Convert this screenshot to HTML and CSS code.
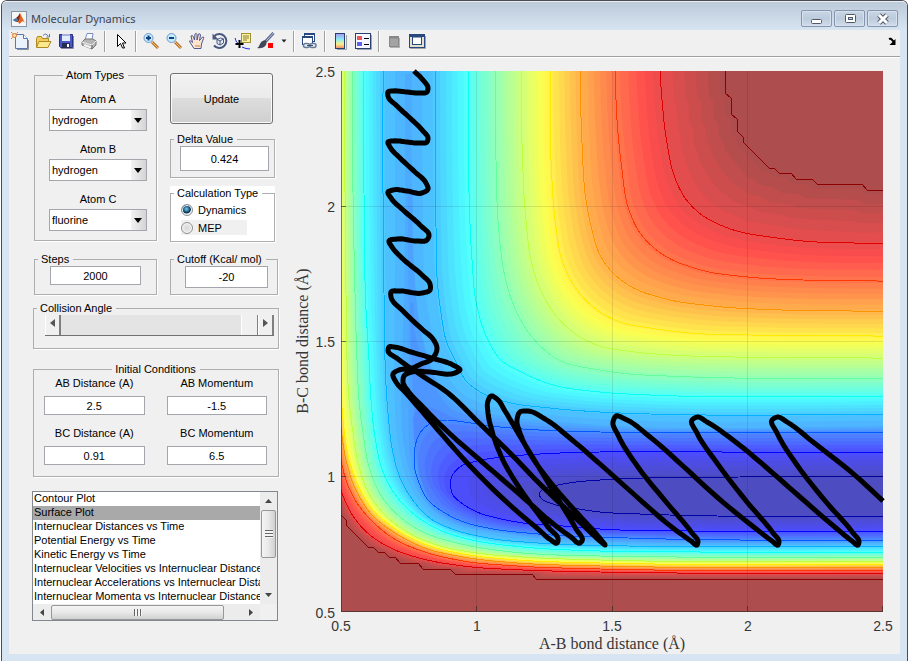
FILE: index.html
```html
<!DOCTYPE html>
<html lang="en">
<head>
<meta charset="utf-8">
<title>Molecular Dynamics</title>
<link rel="stylesheet" href="styles.css">
</head>
<body>
<div class="window">
  <header class="titlebar">
    <svg class="app-icon" width="16" height="16" viewBox="0 0 16 16" aria-hidden="true">
      <rect x="0.5" y="0.5" width="15" height="15" fill="#f4f6f8" stroke="#8a93a0"/>
      <path d="M1.500 9 L5 7 L7 9 L5 11z" fill="#3c78b4"/>
      <path d="M5 7 Q7 6 9 2 L9 8 L7 11 L5 11 L7 9z" fill="#7a2a20"/>
      <path d="M9 2 L14 12 Q12 9 10.500 11 L8.500 13 L7 11 Q9 8 9 2z" fill="#e8641c"/>
    </svg>
    <h1>Molecular Dynamics</h1>
    <div class="window-buttons">
      <button type="button" aria-label="Minimize"><svg width="14" height="12" viewBox="0 0 14 12"><rect x="1.500" y="6.500" width="10" height="4" rx="1" fill="#fff" stroke="#50586a"/></svg></button>
      <button type="button" aria-label="Maximize"><svg width="14" height="12" viewBox="0 0 14 12"><rect x="2.500" y="1.500" width="10" height="8" rx="1" fill="#fff" stroke="#50586a"/><rect x="5.500" y="4.500" width="4" height="2" fill="#c8d2de" stroke="#50586a"/></svg></button>
      <button type="button" aria-label="Close"><svg width="14" height="12" viewBox="0 0 14 12"><path d="M3 2 L11 10 M11 2 L3 10" stroke="#50586a" stroke-width="5"/><path d="M3 2 L11 10 M11 2 L3 10" stroke="#fff" stroke-width="3"/></svg></button>
    </div>
  </header>
  <div class="client">
    <nav class="toolbar" aria-label="Figure toolbar">
      <button type="button" aria-label="New figure"><svg viewBox="0 0 18 18"><path d="M4.500 2.500h8l4 4v10h-12z" fill="#eaf2fc" stroke="#5878b0"/><path d="M12.500 2.500v4h4" fill="#fff" stroke="#5878b0"/><path d="M6 17.500h11.500V8" fill="none" stroke="#8c9096"/><circle cx="3.500" cy="3.500" r="2" fill="#ffe8a0" stroke="#e07030"/><path d="M0 0l1.500 1.500M7 0L5.500 1.500M0 7l1.500-1.500" stroke="#e07030"/></svg></button>
      <button type="button" aria-label="Open file"><svg viewBox="0 0 18 18"><path d="M2.500 15V6.500l1-2h4l1 2h6v3" fill="#f0cc60" stroke="#b08820"/><path d="M2.500 15.500L5 9.500h12l-3 6z" fill="#fce88c" stroke="#b08820"/><path d="M9 3.500q3-3 5 0.500m1.500-2v3h-3" fill="none" stroke="#5878a0"/></svg></button>
      <button type="button" aria-label="Save"><svg viewBox="0 0 18 18"><path d="M2.500 2.500h13v13h-12l-1-1z" fill="#4858c8" stroke="#283078"/><rect x="5" y="2" width="8" height="7" fill="#e4ecf8"/><rect x="5" y="2" width="8" height="2" fill="#a8b0e0"/><rect x="5" y="11" width="8" height="5" fill="#252c50"/><rect x="10" y="12" width="2" height="3" fill="#fff"/><path d="M4 16.500h12.500V4" fill="none" stroke="#88a"/></svg></button>
      <button type="button" aria-label="Print"><svg viewBox="0 0 18 18"><path d="M5 8L7 1.500h6L12 8z" fill="#f8faff" stroke="#7890c0"/><path d="M2 10l3-3h8l3 2v4l-4 4L2 13z" fill="#b4b4b4" stroke="#777"/><path d="M2 10l10 3 4-4" fill="none" stroke="#eee"/><path d="M4 13l7 2.500" stroke="#f4f4f4" stroke-width="2"/><path d="M12 13v4" stroke="#666"/></svg></button>
      <span class="sep"></span>
      <button type="button" aria-label="Edit plot"><svg viewBox="0 0 18 18"><path d="M6.500 2.500v12l3-3 2 4.500h2l-2-5h3.500z" fill="#fff" stroke="#000"/></svg></button>
      <span class="sep"></span>
      <button type="button" aria-label="Zoom in"><svg viewBox="0 0 18 18"><path d="M10 10l6 6" stroke="#b87028" stroke-width="3"/><path d="M10 10l6 6" stroke="#f4c070"/><circle cx="6.500" cy="6" r="4.500" fill="#c4ecfa" stroke="#7098d0"/><path d="M6.500 3.500v5M4 6h5" stroke="#104080" stroke-width="2"/></svg></button>
      <button type="button" aria-label="Zoom out"><svg viewBox="0 0 18 18"><path d="M10 10l6 6" stroke="#b87028" stroke-width="3"/><path d="M10 10l6 6" stroke="#f4c070"/><circle cx="6.500" cy="6" r="4.500" fill="#c4ecfa" stroke="#7098d0"/><path d="M4 6h5" stroke="#104080" stroke-width="2"/></svg></button>
      <button type="button" aria-label="Pan"><svg viewBox="0 0 18 18"><path d="M6 16.500L1.500 9.500q0-2 3 1L3 4q1.500-1.500 2.500 1L6.500 8 7 2q1.500-1.500 2 0.500V8l1.500-6q1.500-1 2 1L11.500 8.500 14.500 5q2-0.500 1 1.500L13.500 12 13 16.500z" fill="#fde4d0" stroke="#4c5890"/><path d="M7 14h5" stroke="#e8b090" stroke-width="2"/></svg></button>
      <button type="button" aria-label="Rotate 3D"><svg viewBox="0 0 18 18"><path d="M3 4.500A7 7 0 1 1 3 13.500" fill="none" stroke="#485880" stroke-width="2"/><path d="M1.500 1.500v6h6z" fill="#485880"/><path d="M6 7.500l3.500-1.500 3 1v4L9 13l-3-1.500zM6 7.500L9 9l3.500-2M9 9v4" fill="#e8eef8" stroke="#485880"/></svg></button>
      <button type="button" aria-label="Data cursor"><svg viewBox="0 0 18 18"><path d="M1 6q1 5 4 6M8 15q4 2 8 2" fill="none" stroke="#2030e0"/><rect x="7.500" y="1.500" width="9" height="9" fill="#fcf4a0" stroke="#a09030"/><path d="M9 4h6M9 6h6M9 8h4" stroke="#88783c"/><path d="M5.500 8v8M1.500 12h8" stroke="#000" stroke-width="2"/></svg></button>
      <button type="button" aria-label="Brush data"><svg viewBox="0 0 18 18"><path d="M16.500 1L9 9" stroke="#5a6890" stroke-width="3"/><path d="M16.500 1L9 9" stroke="#c0cce0"/><path d="M10 9l-2-1q-4 1-5 4t-3 4q6 1 9-3z" fill="#404858"/><rect x="11" y="11" width="5" height="5" fill="#f00"/></svg></button>
      <button type="button" class="narrow" aria-label="Brush options"><svg viewBox="0 0 18 18"><path d="M6.500 7.500h5L9 10.500z" fill="#222"/></svg></button>
      <span class="sep"></span>
      <button type="button" aria-label="Link plot"><svg viewBox="0 0 18 18"><rect x="4.500" y="1.500" width="10" height="8" fill="#fff" stroke="#284880"/><path d="M4 2h11" stroke="#284880" stroke-width="2"/><rect x="2.500" y="4.500" width="10" height="8" fill="#fff" stroke="#284880"/><path d="M2 5h11" stroke="#284880" stroke-width="2"/><rect x="3.500" y="11.500" width="6" height="4" rx="2" fill="#e4ecf4" stroke="#687c98" stroke-width="1.500"/><rect x="10" y="11.500" width="6" height="4" rx="2" fill="#e4ecf4" stroke="#687c98" stroke-width="1.500"/><path d="M7 13.500h6" stroke="#404c60"/></svg></button>
      <span class="sep"></span>
      <button type="button" aria-label="Insert colorbar"><svg viewBox="0 0 18 18"><defs><linearGradient id="cbar" x1="0" y1="0" x2="0" y2="1"><stop offset="0" stop-color="#a498f0"/><stop offset=".4" stop-color="#90ecf4"/><stop offset=".7" stop-color="#f8f088"/><stop offset="1" stop-color="#f08870"/></linearGradient></defs><path d="M6 17.500h9.500V3" fill="none" stroke="#a0a4a8"/><rect x="4.500" y="1.500" width="9" height="15" fill="url(#cbar)" stroke="#284070"/></svg></button>
      <button type="button" aria-label="Insert legend"><svg viewBox="0 0 18 18"><path d="M3 17.500h14.500V3" fill="none" stroke="#a0a4a8"/><rect x="1.500" y="1.500" width="15" height="15" fill="#f6f6ff" stroke="#284070"/><rect x="3" y="4" width="5" height="4" fill="#e85858"/><rect x="3" y="10" width="5" height="4" fill="#6060e8"/><path d="M10 6.500h5M10 12.500h5" stroke="#000"/></svg></button>
      <span class="sep"></span>
      <button type="button" aria-label="Hide plot tools"><svg viewBox="0 0 18 18"><rect x="5" y="6" width="10" height="10" fill="#b4b4b4"/><rect x="4.500" y="4.500" width="9" height="10" fill="#a4a4a4" stroke="#888"/><path d="M4 5.500h10" stroke="#888" stroke-width="2"/></svg></button>
      <button type="button" aria-label="Show plot tools"><svg viewBox="0 0 18 18"><path d="M2 16.500h15.500V4" fill="none" stroke="#a0a4a8"/><rect x="1.500" y="2.500" width="15" height="13" fill="#e0e0cc" stroke="#284880"/><path d="M1 3.500h16" stroke="#284880" stroke-width="3"/><rect x="4.500" y="5" width="9" height="7.500" fill="#fff" stroke="#284880"/></svg></button>
      <button type="button" class="dock" aria-label="Dock figure"><svg viewBox="0 0 18 18"><path d="M7 7q2-1 3 1l2 2" fill="none" stroke="#000" stroke-width="2"/><path d="M13.500 7v6h-6z" fill="#000"/></svg></button>
    </nav>

    <main>
      <form class="controls">
        <div class="columns">
          <div class="column">
            <fieldset class="centered">
              <legend>Atom Types</legend>
              <div class="atoms">
                <div class="field"><label for="atom-a">Atom A</label><span class="combo"><select id="atom-a"><option>hydrogen</option></select></span></div>
                <div class="field"><label for="atom-b">Atom B</label><span class="combo"><select id="atom-b"><option>hydrogen</option></select></span></div>
                <div class="field"><label for="atom-c">Atom C</label><span class="combo"><select id="atom-c"><option>fluorine</option></select></span></div>
              </div>
            </fieldset>
            <fieldset class="steps">
              <legend><label for="steps">Steps</label></legend>
              <div class="body"><input type="text" id="steps" value="2000"></div>
            </fieldset>
          </div>
          <div class="column">
            <button type="button" class="update">Update</button>
            <fieldset class="delta">
              <legend><label for="delta">Delta Value</label></legend>
              <div class="body"><input type="text" id="delta" value="0.424"></div>
            </fieldset>
            <div class="white">
              <fieldset>
                <legend>Calculation Type</legend>
                <div class="calc">
                  <label><input type="radio" name="calc" checked>Dynamics</label>
                  <label class="off"><input type="radio" name="calc">MEP</label>
                </div>
              </fieldset>
            </div>
            <fieldset class="cutoff">
              <legend><label for="cutoff">Cutoff (Kcal/ mol)</label></legend>
              <div class="body"><input type="text" id="cutoff" value="-20"></div>
            </fieldset>
          </div>
        </div>

        <fieldset class="angle">
          <legend><label for="angle">Collision Angle</label></legend>
          <div class="body slider">
            <button type="button" aria-label="Decrease angle"><svg width="5" height="8" viewBox="0 0 5 8"><path d="M5 0v8L0 4z" fill="#555"/></svg></button>
            <input type="range" id="angle" min="0" max="180" value="180">
            <button type="button" aria-label="Increase angle"><svg width="5" height="8" viewBox="0 0 5 8"><path d="M0 0v8l5-4z" fill="#555"/></svg></button>
          </div>
        </fieldset>

        <fieldset class="initial centered">
          <legend>Initial Conditions</legend>
          <div class="pairs">
            <div class="field"><label for="ab-d">AB Distance (A)</label><input type="text" id="ab-d" value="2.5"></div>
            <div class="field"><label for="ab-m">AB Momentum</label><input type="text" id="ab-m" value="-1.5"></div>
            <div class="field"><label for="bc-d">BC Distance (A)</label><input type="text" id="bc-d" value="0.91"></div>
            <div class="field"><label for="bc-m">BC Momentum</label><input type="text" id="bc-m" value="6.5"></div>
          </div>
        </fieldset>

        <div class="listbox">
          <select size="8" aria-label="Plot type">
            <option>Contour Plot</option>
            <option selected>Surface Plot</option>
            <option>Internuclear Distances vs Time</option>
            <option>Potential Energy vs Time</option>
            <option>Kinetic Energy vs Time</option>
            <option>Internuclear Velocities vs Internuclear Distance</option>
            <option>Internuclear Accelerations vs Internuclear Distance</option>
            <option>Internuclear Momenta vs Internuclear Distance</option>
          </select>
          <div class="bar vertical" aria-hidden="true">
            <svg width="7" height="4" viewBox="0 0 7 4"><path d="M0 4h7L3.500 0z" fill="#444"/></svg>
            <span class="thumb"><i></i></span>
            <svg width="7" height="4" viewBox="0 0 7 4"><path d="M0 0h7L3.500 4z" fill="#444"/></svg>
          </div>
          <div class="bar horizontal" aria-hidden="true">
            <svg width="4" height="7" viewBox="0 0 4 7"><path d="M4 0v7L0 3.500z" fill="#444"/></svg>
            <span class="thumb"><i></i></span>
            <svg width="4" height="7" viewBox="0 0 4 7"><path d="M0 0v7l4-3.500z" fill="#444"/></svg>
          </div>
        </div>
      </form>

      <svg class="plot" viewBox="291 57 609 597" role="img" aria-label="Potential energy surface with trajectory">
        <defs><clipPath id="axes"><rect x="341" y="71" width="542" height="541"/></clipPath></defs>
        <g clip-path="url(#axes)">
          <g id="bands"></g>
          <g id="contours" class="contours"></g>
          <path class="grid" d="M476.500 71v541M612.500 71v541M747.500 71v541M341 206.500h542M341 341.500h542M341 476.500h542"/>
        </g>
        <path class="axis" d="M341.500 71v540.500H883M476.500 611v-5M612.500 611v-5M747.500 611v-5M882.500 611v-5M341 206.500h5M341 341.500h5M341 476.500h5"/>
        <path id="trajectory" class="trajectory"/>
        <g class="ticks ticks-y">
          <text x="335" y="77">2.5</text><text x="335" y="212">2</text><text x="335" y="347">1.5</text><text x="335" y="482">1</text><text x="335" y="618">0.5</text>
        </g>
        <g class="ticks ticks-x">
          <text x="341" y="631">0.5</text><text x="477" y="631">1</text><text x="612" y="631">1.5</text><text x="748" y="631">2</text><text x="883" y="631">2.5</text>
        </g>
        <text class="axis-label" x="612" y="649">A-B bond distance (Å)</text>
        <text class="axis-label" transform="translate(308 341) rotate(-90)">B-C bond distance (Å)</text>
      </svg>
    </main>
  </div>
</div>
<script src="plot.js"></script>
</body>
</html>
```
FILE: styles.css
```css
* { box-sizing: border-box; }

html, body { height: 100%; }

body {
  margin: 0;
  background: #fff;
  font: 11px/14px "Liberation Sans", Arial, sans-serif;
  color: #000;
}

button, input, select { font: inherit; color: inherit; }

.window {
  display: flex;
  flex-direction: column;
  min-height: 100%;
  margin: 0 1px;
  padding: 0 7px 7px;
  border: solid #4c4c54;
  border-width: 1px 1px 0;
  border-radius: 6px 6px 0 0;
  background: #d7e4f2;
}

.titlebar {
  display: flex;
  align-items: center;
  gap: 4px;
  height: 29px;
  margin: 0 -7px;
  padding: 5px 9px 0;
  border-top: 1px solid #e8eef4;
  border-radius: 5px 5px 0 0;
  background: linear-gradient(#bccad9, #d7e4f2);
}

.titlebar h1 {
  flex: 1;
  margin: 0;
  font: 11px/16px "Noto Sans", "Open Sans", sans-serif;
  color: #3c4450;
}

.window-buttons { display: flex; gap: 2px; }

.window-buttons button {
  display: flex;
  align-items: center;
  justify-content: center;
  width: 31px;
  height: 17px;
  padding: 0;
  border: 1px solid #8794b0;
  border-radius: 2px;
  background: linear-gradient(#c8d6e5, #bccbdc 50%, #cfdcea);
  box-shadow: inset 0 0 0 1px #d6e2ee;
}

.client {
  flex: 1;
  display: flex;
  flex-direction: column;
  background: #f0f0f0;
}

.toolbar {
  display: flex;
  align-items: center;
  height: 27px;
  padding-bottom: 4px;
  border-bottom: 1px solid #a0a0a0;
  box-shadow: 0 1px 0 #fff;
}

.toolbar button {
  display: flex;
  align-items: center;
  justify-content: center;
  width: 23px;
  height: 22px;
  padding: 0 1px 0 0;
  border: 0;
  background: none;
}

.toolbar svg { flex: none; width: 18px; height: 18px; }
.toolbar .narrow { width: 12px; }
.toolbar .dock { width: 18px; margin-left: auto; }

.sep {
  width: 2px;
  height: 21px;
  margin: 0 3px;
  border-left: 1px solid #a0a0a0;
  border-right: 1px solid #fff;
}

main {
  display: flex;
  align-items: flex-start;
}

.controls {
  flex: none;
  width: 282px;
  padding: 11px 12px 0 25px;
}

.columns {
  display: grid;
  grid-template-columns: 123px 105px;
  gap: 13px;
}

.column { display: flex; flex-direction: column; }

fieldset {
  min-width: 0;
  margin: 0;
  padding: 0;
  border: 1px solid #aeaeae;
  box-shadow: 1px 1px 0 #fff;
}

legend { padding: 0 4px 0 3px; margin-left: 3px; white-space: nowrap; }
.centered > legend { margin: 0 auto; }

input[type="text"] {
  display: block;
  width: 100%;
  padding: 0;
  border: 1px solid #a4a6ab;
  background: #fff;
  text-align: center;
}

.field { display: flex; flex-direction: column; }
.field label { text-align: center; }

.atoms {
  display: flex;
  flex-direction: column;
  gap: 11px;
  padding: 10px 9px 9px 14px;
}

.atoms .field { gap: 3px; }

.combo {
  position: relative;
  display: block;
  border: 1px solid #a4a6ab;
  background: #fff;
}

.combo select {
  display: block;
  width: 100%;
  height: 20px;
  padding: 0 17px 0 2px;
  border: 0;
  background: none;
  appearance: none;
}

.combo::before {
  content: "";
  position: absolute;
  inset: 0 0 0 auto;
  width: 15px;
  background: linear-gradient(90deg, #f2f2f2, #d4d4d4);
}

.combo::after {
  content: "";
  position: absolute;
  top: 8px;
  right: 4px;
  border: solid transparent;
  border-width: 5px 4px 0;
  border-top-color: #000;
}

.steps { margin-top: 11px; }
.steps .body { padding: 0 15px 9px; }
.steps input { height: 19px; }

.update {
  height: 51px;
  margin: 5px 2px 8px 0;
  border: 1px solid #707070;
  border-radius: 3px;
  background: linear-gradient(#f2f2f2, #ebebeb 48%, #dddddd 50%, #cfcfcf);
  box-shadow: inset 0 0 0 1px #fafafa;
}

.delta .body { padding: 0 5px 6px 9px; }
.delta input { height: 25px; }

.white { margin: 8px 0 10px; background: #fff; }

.calc { padding: 1px 0 4px 10px; }

.calc label {
  display: flex;
  align-items: center;
  gap: 5px;
  height: 18px;
}

.calc .off {
  width: 66px;
  height: 15px;
  margin: 1px 0 2px;
  background: #f0f0f0;
}

.calc input {
  width: 12px;
  height: 12px;
  margin: 0;
  border: 1px solid #8e8f8f;
  border-radius: 50%;
  background: radial-gradient(#d8d8d8, #f4f4f4);
  box-shadow: inset 0 0 0 1px #f4f4f4;
  appearance: none;
}

.calc input:checked {
  background: radial-gradient(circle at 45% 40%, #7cd0f0 0, #185a80 3px, #0c2c4c 4px, #e8eef2 5px);
}

.cutoff { margin-right: -3px; }
.cutoff .body { padding: 0 9px 6px 14px; }
.cutoff input { height: 22px; }

.angle { margin: 6px 0 0 -1px; }

.slider {
  display: flex;
  height: 21px;
  margin: 0 4px 12px 11px;
  border-bottom: 1px solid #707070;
}

.slider button {
  display: flex;
  align-items: center;
  justify-content: center;
  width: 16px;
  padding: 0 0 4px;
  border: solid #fff;
  border-width: 0 0 0 1px;
  border-right: 2px solid #808080;
  background: #f0f0f0;
}

.slider input {
  flex: 1;
  min-width: 0;
  height: 20px;
  margin: 0;
  background: #e4e4e4;
  appearance: none;
}

.slider input::-webkit-slider-thumb {
  width: 17px;
  height: 20px;
  border-left: 1px solid #fff;
  border-right: 1px solid #808080;
  background: #f0f0f0;
  appearance: none;
}

.initial { margin: 13px 0 0 -1px; }

.pairs {
  display: grid;
  grid-template-columns: 1fr 1fr;
  gap: 11px 22px;
  padding: 0 11px 11px 10px;
}

.pairs .field { gap: 6px; }
.pairs input { height: 19px; }

.listbox {
  display: grid;
  grid-template-columns: 1fr 17px;
  grid-template-rows: 112px 16px;
  margin: 14px 1px 0 -2px;
  border: 1px solid #828790;
  background: #f0f0f0;
}

.listbox select {
  width: 100%;
  min-width: 0;
  height: 112px;
  padding: 0;
  border: 0;
  border-radius: 0;
  outline: 0;
  background: #fff;
  overflow: hidden;
  scrollbar-width: none;
}

.listbox option {
  height: 14px;
  min-height: 14px;
  padding: 0 1px;
  line-height: 14px;
  overflow: hidden;
}

.listbox option:checked {
  background: #a9a9a9 linear-gradient(#a9a9a9, #a9a9a9);
  color: #000;
}

.bar { display: flex; align-items: center; background: #ececec; }
.bar svg { flex: none; }
.vertical { flex-direction: column; justify-content: space-between; padding: 7px 0; }
.horizontal { padding: 0 7px; }

.thumb {
  display: flex;
  align-items: center;
  justify-content: center;
  border: 1px solid #979797;
  border-radius: 2px;
}

.vertical .thumb { width: 15px; height: 48px; margin: 7px 0 auto; background: linear-gradient(90deg, #f4f4f4, #e8e8e8 50%, #d0d0d0); }
.horizontal .thumb { width: 173px; height: 15px; margin: 0 auto 0 7px; background: linear-gradient(#f4f4f4, #e8e8e8 50%, #d0d0d0); }
.vertical i { width: 8px; height: 8px; background: repeating-linear-gradient(#666 0 1px, #f4f4f4 1px 3px); }
.horizontal i { width: 8px; height: 7px; background: repeating-linear-gradient(90deg, #666 0 1px, #f4f4f4 1px 3px); }

.plot { flex: 1; min-width: 0; display: block; }
.contours path { fill: none; stroke-width: 1; shape-rendering: crispEdges; }
.grid { fill: none; stroke: #000; stroke-opacity: .1; }
.axis { fill: none; stroke: #262626; stroke-opacity: .6; }
.trajectory { fill: none; stroke: #000; stroke-width: 5; stroke-linejoin: round; }
.ticks { fill: #363636; font-size: 14px; }
.ticks-y { text-anchor: end; }
.ticks-x { text-anchor: middle; }
.axis-label { fill: #363636; font: 16px "Liberation Serif", serif; text-anchor: middle; }
```
FILE: plot.js
```js
// Contour keys of the energy surface. "upper" runs from the right edge round
// the inside of the valley, "lower" comes back along the repulsive wall.
const keys = [
  { upper: '883,476 740,477 643,478 600,480 563,484 547,488 540,492 539,495',
    lower: '539,495 542,499 553,504 573,508 600,512 640,514 717,516 883,516' },
  { upper: '883,452 740,452 600,452 540,454 503,457 477,461 460,467 452,476 450,483',
    lower: '450,483 453,495 463,504 477,512 497,518 523,523 563,526 600,529 690,531 883,531' },
  { upper: '883,432 740,432 600,432 523,429 483,425 457,421 446,420 431,423 420,433 415,447 414,460',
    lower: '414,460 415,470 418,480 428,500 445,513 461,521 488,528 538,534 628,538 740,540 883,540' },
  { upper: '883,414 650,414 600,412 550,408 503,401 477,390 467,382 455,360 447,343 441,313 437,277 436,227 435,71',
    lower: '383,71 383,193 384,293 385,360 388,413 393,453 401,480 415,503 431,519 455,530 488,538 538,543 628,546 883,546' },
  { upper: '883,396 677,396 650,395 600,392 553,385 523,373 501,360 487,338 477,307 472,260 469,193 468,71',
    lower: '363,71 364,193 366,310 369,360 371,400 375,437 383,472 397,497 415,515 440,530 477,541 523,547 600,551 700,552 883,552' },
  { upper: '883,378 733,378 667,376 630,374 600,370 557,359 532,337 517,313 505,277 499,233 496,160 495,71',
    lower: '352,71 353,193 355,293 357,360 359,400 363,433 370,470 382,497 400,517 423,532 457,543 503,551 557,555 600,556 883,557' },
  { upper: '883,358 733,357 670,355 627,351 600,346 577,335 557,317 542,293 531,260 526,220 522,143 521,71',
    lower: '344,71 345,193 346,293 347,360 349,400 353,433 358,463 368,492 385,515 407,532 437,545 477,553 523,557 600,560 883,561' },
  { upper: '883,336 750,335 690,333 650,328 620,322 600,312 577,290 562,260 556,227 551,160 550,71',
    lower: '337,71 337,193 338,293 340,360 341,390 343,420 347,450 357,483 373,510 397,530 427,545 463,554 517,560 600,563 883,564' },
  { upper: '883,311 782,310 713,306 662,298 630,286 613,273 600,255 592,230 586,200 582,143 580,71',
    lower: '330,71 331,193 333,293 336,360 338,400 341,428 346,460 355,488 372,515 395,533 425,548 463,557 517,563 600,566 883,567' },
  { upper: '883,281 803,280 748,277 697,269 662,254 640,233 628,207 622,170 617,120 615,71',
    lower: '324,71 325,193 328,293 332,360 337,430 341,460 347,483 357,503 374,523 396,540 425,552 463,561 517,566 600,569 883,570' },
  { upper: '883,243 817,242 777,238 725,227 698,212 685,198 675,178 667,143 662,100 660,71',
    lower: '318,71 319,193 322,293 327,360 334,450 341,490 353,516 370,535 393,549 423,559 463,566 523,570 600,572 883,573' },
  { upper: '883,190 867,190 862,184 817,184 812,179 796,179 791,173 779,173 774,168 769,168 743,142 743,137 737,131 737,119 731,114 731,98 725,93 725,71',
    lower: '310,71 312,193 315,293 320,360 326,440 341,515 346,520 346,525 368,547 373,547 378,552 384,552 389,557 395,557 400,563 418,563 423,569 450,569 455,574 532,574 536,579 883,579',
    straight: true }
];

const levelOf = k => 0.04 + 0.0865 * k;

const parse = s => s.split(' ').map(p => p.split(',').map(Number));

// Catmull-Rom subdivision of a control polyline.
function smooth(pts, steps) {
  const out = [];
  for (let i = 0; i < pts.length - 1; i++) {
    const a = pts[i], b = pts[i + 1];
    const p = pts[i - 1] || a, q = pts[i + 2] || b;
    const len = Math.hypot(b[0] - a[0], b[1] - a[1]);
    const tan = (u, v, w) => {
      const l1 = Math.hypot(v[0] - u[0], v[1] - u[1]) || len;
      const l2 = Math.hypot(w[0] - v[0], w[1] - v[1]) || len;
      return [0, 1].map(d => len * (((v[d] - u[d]) / l1) * l2 + ((w[d] - v[d]) / l2) * l1) / (l1 + l2));
    };
    const m0 = tan(p, a, b), m1 = tan(a, b, q);
    for (let s = 0; s < steps; s++) {
      const t = s / steps, t2 = t * t, t3 = t2 * t;
      out.push([0, 1].map(d => (2 * t3 - 3 * t2 + 1) * a[d] + (t3 - 2 * t2 + t) * m0[d]
        + (3 * t2 - 2 * t3) * b[d] + (t3 - t2) * m1[d]));
    }
  }
  out.push(pts[pts.length - 1]);
  return out;
}

// Evenly spaced points along a polyline.
function resample(pts, n) {
  const at = [0];
  for (let i = 1; i < pts.length; i++) {
    at.push(at[i - 1] + Math.hypot(pts[i][0] - pts[i - 1][0], pts[i][1] - pts[i - 1][1]));
  }
  const total = at[at.length - 1], out = [];
  for (let k = 0, i = 1; k <= n; k++) {
    const d = total * k / n;
    while (i < at.length - 1 && at[i] < d) i++;
    const f = at[i] > at[i - 1] ? (d - at[i - 1]) / (at[i] - at[i - 1]) : 0;
    out.push([0, 1].map(c => pts[i - 1][c] + f * (pts[i][c] - pts[i - 1][c])));
  }
  return out;
}

const corner = pts => {
  let best = 0;
  pts.forEach((p, i) => { if (p[0] - p[1] < pts[best][0] - pts[best][1]) best = i; });
  return best;
};

function outline(key, k) {
  const make = s => key.straight ? parse(s) : smooth(parse(s), 8);
  const up = make(key.upper), low = make(key.lower);
  const cu = k < 3 ? Math.round(up.length * 0.5) : corner(up);
  const cl = k < 3 ? Math.round(low.length * 0.35) : corner(low);
  return [up.slice(0, cu + 1), up.slice(cu), low.slice(0, cl + 1), low.slice(cl)]
    .flatMap(p => resample(p, 60));
}

const shapes = keys.map((key, k) => ({ t: levelOf(k), pts: outline(key, k) }));

// Narrow floor of the upper valley, between the open and the closed contours.
shapes.splice(3, 0, {
  t: 0.266,
  pts: outline({
    upper: '883,426 600,425 550,421 510,417 480,411 455,400 437,380 426,350 419,320 415,290 412,200 412,71',
    lower: '405,71 405,200 404,290 402,360 401,400 403,440 410,473 422,498 438,515 460,526 492,532 535,538 620,542 883,543'
  }, 3)
});

function shapeAt(t) {
  let i = 0;
  while (i < shapes.length - 2 && shapes[i + 1].t < t) i++;
  const a = shapes[i], b = shapes[i + 1], f = (t - a.t) / (b.t - a.t);
  return a.pts.map((p, n) => [p[0] + f * (b.pts[n][0] - p[0]), p[1] + f * (b.pts[n][1] - p[1])]);
}

function jet(t) {
  const ch = c => Math.max(0, Math.min(1, 1.5 - Math.abs(4 * t - c)));
  return [ch(3), ch(2), ch(1)].map(v => Math.round(255 * v));
}
const rgb = c => `rgb(${c.join(',')})`;
const faded = c => rgb(c.map(v => Math.round(v * 0.7 + 76.5)));

const line = pts => 'M' + pts.map(p => p[0].toFixed(1) + ' ' + p[1].toFixed(1)).join('L');

function add(parent, name, attrs) {
  const el = document.createElementNS('http://www.w3.org/2000/svg', name);
  Object.entries(attrs).forEach(([k, v]) => el.setAttribute(k, v));
  parent.append(el);
}

const bands = document.getElementById('bands');
add(bands, 'rect', { x: 341, y: 71, width: 542, height: 541, fill: faded([139, 0, 0]) });
for (let i = 63; i > 2; i--) {
  add(bands, 'path', { d: line(shapeAt(i / 64)) + 'Z', fill: faded(jet((i - 0.5) / 64)) });
}

const contours = document.getElementById('contours');
keys.forEach((key, k) => {
  const stroke = rgb(k === 11 ? [139, 0, 0] : jet(levelOf(k)));
  const make = s => key.straight ? parse(s) : smooth(parse(s), 8);
  add(contours, 'path', { d: line(make(key.upper)), stroke });
  add(contours, 'path', { d: line(make(key.lower)), stroke });
});

const trajectory = '883,501 857,477 813,442 787,422 777,417 772,420 777,433 797,465 827,503 853,533 859,542 858,545 '
  + '852,541 836,528 800,497 767,468 733,440 707,422 697,417 692,420 697,433 717,463 747,502 773,533 779,542 778,545 '
  + '772,541 755,528 717,497 683,466 650,437 625,419 616,416 613,422 618,435 638,467 667,503 692,533 698,542 697,545 '
  + '691,541 673,528 637,497 600,464 571,439 545,419 528,411 520,412 517,420 520,433 529,452 551,483 578,514 598,536 605,545 '
  + '600,541 585,527 565,508 538,482 511,454 478,422 448,393 418,373 398,359 388,350 389,347 394,347 411,352 435,359 453,365 460,370 '
  + '455,373 430,372 412,372 404,376 403,382 408,391 421,405 448,432 481,461 525,499 551,522 571,537 580,543 582,541 576,529 558,499 '
  + '538,466 518,433 505,411 497,399 491,396 488,401 488,413 492,431 501,456 525,496 548,527 558,541 557,543 551,540 538,529 511,506 471,467 438,430 '
  + '406,393 396,382 393,374 399,370 410,369 421,364 432,359 437,348 433,339 423,330 403,311 391,297 391,292 400,291 422,293 '
  + '430,290 430,284 422,275 403,259 392,247 389,241 397,239 417,241 427,240 429,236 420,225 403,210 391,198 '
  + '388,192 393,190 407,191 422,193 428,189 426,183 415,172 400,158 390,147 388,142 393,141 407,142 '
  + '419,143 427,142 428,138 423,131 410,118 397,106 388,96 388,92 393,91 407,92 420,93 427,92 428,88 423,80 414,71';
document.getElementById('trajectory').setAttribute('d', line(smooth(parse(trajectory), 6)));
```
